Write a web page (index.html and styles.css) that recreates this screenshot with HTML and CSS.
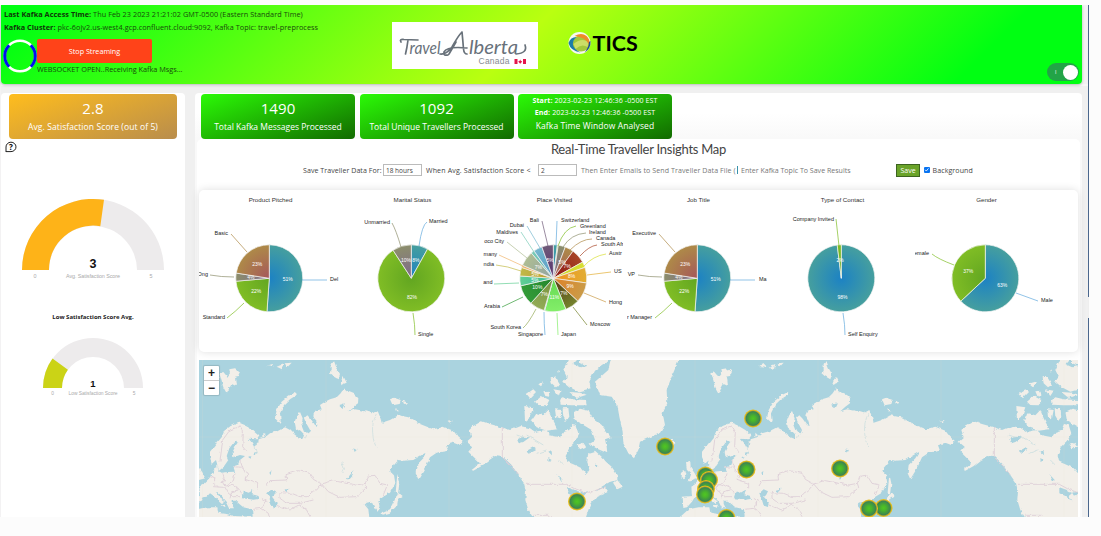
FILE: index.html
```html
<!DOCTYPE html>
<html lang="en">
<head>
<meta charset="utf-8">
<title>Real-Time Traveller Insights</title>
<link rel="stylesheet" href="styles.css">
</head>
<body>
<div class="app">
  <header class="header">
    <div class="status">
      <p class="line access"><b>Last Kafka Access Time:</b> Thu Feb 23 2023 21:21:02 GMT-0500 (Eastern Standard Time)</p>
      <p class="line cluster"><b>Kafka Cluster:</b> pkc-6ojv2.us-west4.gcp.confluent.cloud:9092, Kafka Topic: travel-preprocess</p>
      <div class="stream">
        <svg class="spinner" viewBox="0 0 34 34"><circle cx="17" cy="17" r="15.3" fill="none" stroke="#fff" stroke-width="2.6"/><path d="M6.2 6.2A15.3 15.3 0 0 0 6.2 27.8M27.8 6.2A15.3 15.3 0 0 1 27.8 27.8" fill="none" stroke="#0010f0" stroke-width="3"/></svg>
        <div>
          <button class="stop">Stop Streaming</button>
          <p class="socket">WEBSOCKET OPEN..Receiving Kafka Msgs...</p>
        </div>
      </div>
    </div>
    <svg class="alberta" viewBox="0 0 146 47">
      <rect width="146" height="47" fill="#fff"/>
      <g class="script"><text x="17.500" y="32" textLength="31" lengthAdjust="spacingAndGlyphs" font-size="17">ravel</text><text x="77" y="32" textLength="49" lengthAdjust="spacingAndGlyphs" font-size="19.500">lberta</text></g>
      <g fill="none" stroke="#68717a" stroke-width="1.700" stroke-linecap="round" stroke-linejoin="round"><path d="M9 20Q7 17 12 17.500L26 18M16 18Q15 26 13.500 32"/><path d="M48 32Q54 33 60 25Q66 14 70 10Q71 20 71.500 27Q72 32 75 32M56 33Q51 34 52 30Q55 24 75 26M57 32L64 20"/><path d="M124 32Q136 31 133 23"/></g>
      <text x="86.500" y="42" class="canada" textLength="31">Canada</text>
      <path d="M122.500 37h3v5h-3zM131 37h3v5h-3zM126.200 39.200l1.300-.3.700-1.500.7 1.500 1.300.3-.8 1.400-1.200 1.200-1.200-1.200z" fill="#e4144a"/>
    </svg>
    <div class="tics">
      <svg viewBox="0 0 24 24"><circle cx="12" cy="12" r="11" fill="#f6f8f2"/><ellipse cx="13.500" cy="12.500" rx="8.500" ry="8" fill="#a4c83c"/><path d="M6 13Q14 6 21 11L20 16Q14 12 8 18Z" fill="#ccde68"/><path d="M1 12Q3 6 9 6Q5 9 5.500 14Q7 19 13 21.500Q3 20 1 12Z" fill="#1c7ca8"/><path d="M7 5Q14 1 19 5Q23 9 22 14Q18 6 7 5Z" fill="#ee8a28"/><path d="M23 10Q23.500 18 17 21.500Q21.500 16 21.500 11Z" fill="#205090"/></svg>
      <span>TICS</span>
    </div>
    <div class="toggle"><span>I</span><i></i></div>
  </header>

  <main class="main">
    <aside class="side">
      <div class="card gold"><strong>2.8</strong><span class="cap avg">Avg. Satisfaction Score (out of 5)</span></div>
      <svg class="help" viewBox="0 0 12 12"><path d="M1 11V6A5 4.700 0 1 1 6 10.600H1" fill="none" stroke="#222" stroke-width="1"/><text x="6" y="8.600" text-anchor="middle">?</text></svg>
      <svg class="gauge big" viewBox="0 0 150 86">
        <path d="M4 73A71 71 0 0 1 146 73H119A44 44 0 0 0 31 73Z" fill="#edebec"/>
        <path d="M4 73A71 71 0 0 1 86 2.800L82.300 29.200A44 44 0 0 0 31 73Z" fill="#feb318"/>
        <text class="val" x="75" y="71">3</text><text class="tick" x="17" y="81">0</text><text class="tick" x="133" y="81">5</text><text class="tick" x="75" y="81" textLength="54">Avg. Satisfaction Score</text>
      </svg>
      <h3>Low Satisfaction Score Avg.</h3>
      <svg class="gauge small" viewBox="0 0 110 66">
        <path d="M5 52A50 50 0 0 1 105 52H86A31 31 0 0 0 24 52Z" fill="#edebec"/>
        <path d="M5 52A50 50 0 0 1 14.500 22.600L29.900 33.800A31 31 0 0 0 24 52Z" fill="#cbd316"/>
        <text class="val" x="55" y="51">1</text><text class="tick" x="14.500" y="59">0</text><text class="tick" x="96" y="59">5</text><text class="tick" x="55" y="59" textLength="49">Low Satisfaction Score</text>
      </svg>
    </aside>

    <section class="content">
      <div class="cards">
        <div class="card green"><strong>1490</strong><span class="cap total">Total Kafka Messages Processed</span></div>
        <div class="card green"><strong>1092</strong><span class="cap unique">Total Unique Travellers Processed</span></div>
        <div class="card green window"><p><b>Start:</b> 2023-02-23 12:46:36 -0500 EST</p><p><b>End:</b> 2023-02-23 12:46:36 -0500 EST</p><span class="cap">Kafka Time Window Analysed</span></div>
      </div>
      <div class="insights">
        <h1>Real-Time Traveller Insights Map</h1>
        <div class="filters">
          <label class="f1">Save Traveller Data For:</label><span class="field">18 hours</span>
          <label class="f2">When Avg. Satisfaction Score &lt;</label><span class="field">2</span>
          <span class="f3">Then Enter Emails to Send Traveller Data File (</span><span class="f4">Enter Kafka Topic To Save Results</span>
          <button class="save">Save</button><span class="check"><svg viewBox="0 0 6 6"><path d="M1.200 3L2.500 4.400 4.900 1.500" fill="none" stroke="#fff" stroke-width=".9"/></svg></span><label class="f5">Background</label>
        </div>
        <div class="charts" id="charts"></div>
        <div class="map">
          <svg class="world" viewBox="199 360 879 157">
            <defs>
              <filter id="coast" x="-5%" y="-5%" width="110%" height="110%"><feTurbulence type="fractalNoise" baseFrequency=".2" numOctaves="3" seed="4"/><feDisplacementMap in="SourceGraphic" scale="3.500" xChannelSelector="R" yChannelSelector="G"/></filter>
              <radialGradient id="pin"><stop offset="0" stop-color="#4fc722"/><stop offset=".3" stop-color="#49b52b"/><stop offset=".76" stop-color="#3c8550"/><stop offset=".84" stop-color="#8d9a40"/><stop offset=".92" stop-color="#e6bd18"/><stop offset="1" stop-color="#e6bd18"/></radialGradient>
              <g id="earth">
                <g transform="translate(190 350) scale(.33333)">
                  <g fill="#f2efe9">
                    <path d="M60 305L80 280 95 262 103 242 122 228 148 218 166 226 190 240 208 256 200 268 176 266 186 278 192 290 204 284 206 268 225 262 240 250 262 244 285 232 300 240 312 252 325 262 338 266 342 256 332 245 318 236 314 215 322 195 330 186 338 205 334 225 342 245 356 250 360 240 350 222 342 205 352 196 362 206 375 225 383 228 378 212 370 196 376 182 395 178 390 165 405 155 420 148 440 142 452 130 462 115 475 125 492 132 505 145 504 160 490 170 475 184 495 178 520 182 545 190 562 180 570 200 575 218 600 210 625 196 655 202 690 222 730 238 760 230 790 242 805 262 818 272 808 285 790 278 768 286 774 302 740 308 720 322 705 355 685 388 677 370 680 345 700 325 712 305 690 318 670 330 640 332 625 330 598 362 612 376 616 400 600 428 580 440 565 452 570 475 562 485 552 470 545 455 530 458 524 464 535 478 540 520 190 520 186 478 160 472 148 462 138 452 125 452 125 462 132 475 120 475 110 455 92 435 80 425 88 440 105 452 98 462 75 440 60 430 50 440 38 442 30 455 15 472 4 474 2 440 30 438 28 410 40 402 58 385 65 372 73 358 82 345 85 362 95 368 115 366 135 365 130 350 145 345 150 330 165 318 150 315 130 322 128 305 138 285 145 275 135 272 118 295 110 318 115 330 100 352 87 362 78 330 65 342 60 320Z"/>
                    <path d="M-30 520L-5 500 20 478 50 472 82 472 85 488 110 492 130 498 190 500V520ZM268 218L255 205 260 180 275 155 300 135 318 126 320 135 300 148 282 165 270 190 272 212ZM88 70L100 66 112 80 120 70 135 82 138 108 125 102 118 115 110 130 100 112ZM118 58L135 55 150 65 144 78 130 80 120 70ZM425 42L432 33 440 55 450 72 445 88 428 78 417 68 425 60ZM460 78L470 98 450 106ZM600 148L612 143 632 150 628 162 608 166ZM638 152L655 158 642 162ZM615 175L628 184 618 184ZM772 212L788 210 780 218ZM622 372L628 400 624 434 617 428ZM628 430L638 438 622 448 618 470 600 488 578 494 574 488 600 478 610 460 618 440ZM12 340L25 335 26 352 38 370 46 385 20 392 28 372 15 360ZM-3 365L10 360 13 372 4 388 -4 384ZM228 48L248 42 250 50ZM260 50L280 42 276 58ZM284 40L305 38 292 52ZM220 248L228 256 220 262ZM92 466L108 464 104 474Z"/>
                  </g>
                  <g fill="#aad3df">
                    <path d="M155 445L162 424 176 428 190 420 185 432 205 438 210 446 190 449 172 446ZM232 430L245 418 258 424 252 436 246 440 260 458 258 474 246 470 240 450ZM470 388L484 370 490 360 488 374 476 388ZM448 165L465 160 458 174ZM490 295L500 300 494 306ZM282 420L296 416 290 426ZM188 308L198 306 194 318ZM175 322L184 318 182 326ZM238 368L244 362 242 376Z"/>
                    <path d="M560 190Q545 215 548 250T562 292M455 335L464 355 458 368M350 255L346 265M205 275Q190 290 200 310" fill="none" stroke="#cfe0e0" stroke-width="2.500"/>
                  </g>
                  <g fill="none" stroke="#dccdd6" stroke-width="2.500"><path d="M90 335L98 270 120 240 150 228 160 245 158 290M158 290L170 305M150 330L160 360 175 370 165 388 200 400 200 415M60 380L75 385 70 400 85 410M98 370L105 395 90 400 110 405 130 392 135 370M130 350L155 352M70 410L100 412 125 405 145 415 155 430M105 412L115 430 130 440 150 440M120 445L125 425 145 420M215 445L232 455M230 410L240 392 290 390 288 374 325 362 360 370 370 388 395 402 380 420 365 430 355 440 330 440 305 430 270 428 270 445M395 402L430 392 460 398 500 405 526 400 530 412 500 440 450 442 415 425ZM526 400L535 378 555 376 570 400 592 405 580 435M270 445L290 460 330 460 370 450M260 465L300 480 330 465 350 480 360 500M190 478L215 475 235 490 240 510M215 475L225 455"/></g>
                </g>
                <g transform="translate(480 350) scale(.33333)">
                  <g fill="#f2efe9">
                    <path d="M-32 240L-20 228 5 214 30 222 65 232 90 240 120 228 150 235 165 245 195 240 210 256 240 262 250 245 268 240 276 222 290 225 298 250 285 275 270 290 257 315 262 335 285 345 305 355 320 372 328 360 322 335 325 308 345 302 365 320 378 335 395 350 412 375 412 390 385 398 365 410 345 425 375 410 385 425 370 432 350 440 335 460 325 480 312 520 170 520 145 480 136 450 138 425 132 400 115 375 95 345 70 322 45 318 25 332 5 348 -20 362 -25 360 0 340 -15 325 -35 305 -22 290 -40 275 -25 262Z"/>
                    <path d="M392 28L385 60 345 95 360 135 395 140 412 165 418 200 428 245 430 280 445 310 462 325 475 300 480 275 510 262 540 248 555 225 548 190 562 160 560 120 575 80 600 20ZM250 60L268 20 395 20 370 45 345 62 328 95 332 115 295 125 270 112 250 95 260 80ZM240 150L250 142 275 148 318 150 320 166 275 166 242 164ZM280 185L300 176 325 182 335 200 365 225 392 262 375 268 380 290 382 310 355 298 325 282 345 270 335 240 310 225 285 212ZM155 212L170 190 190 196 205 180 215 205 232 238 200 242 170 232ZM133 168L160 172 150 200 135 212ZM140 132L160 118 168 126 150 145ZM165 155L185 138 208 150 200 166 175 165ZM212 82L225 80 240 104 228 112 215 100ZM220 118L245 122 235 138ZM225 178L245 180 240 205 228 200ZM248 175L265 174 268 200 258 214 250 200ZM172 100L192 94 186 112ZM190 124L206 122 208 140 196 138ZM268 126L300 128 320 134 290 144ZM290 285L310 278 318 290 300 298ZM400 400L412 390 428 410 412 418ZM565 276L578 266 587 278 575 290ZM235 60L240 64 236 68Z"/>
                  </g>
                  <g fill="#aad3df"><path d="M112 268L128 260 150 262 130 276 118 280ZM140 302L160 292 168 298 146 308ZM205 305L215 300 216 316ZM232 372L248 390 244 396ZM262 412L285 420 300 430 290 438 298 452 280 438 262 430ZM300 428L325 424 308 440ZM345 340L355 350 348 354ZM300 20L280 42 300 52 322 48 300 40ZM205 324L215 330 206 336Z"/><path d="M140 255L190 285M110 255L130 262M170 310L200 300M235 330L250 345" fill="none" stroke="#cbdfe0" stroke-width="2.500"/></g>
                  <path d="M67 232V322L90 345 115 375M138 403H262L290 418 325 430 350 420 378 410M160 496H205L225 510" fill="none" stroke="#dccdd6" stroke-width="2.500"/>
                </g>
              </g>
            </defs>
            <rect x="199" y="360" width="879" height="157" fill="#aad3df"/>
            <g filter="url(#coast)"><use href="#earth" x="-492"/><use href="#earth"/><use href="#earth" x="492"/></g>
            <path d="M202.500 360V517M326 360V517M449 360V517M572 360V517M695 360V517M818 360V517M941 360V517M1064 360V517M199 437H1078" stroke="#e8dfcb" stroke-width=".5" opacity=".25"/>
            <g class="pins"><circle cx="577" cy="501.500" r="9"/><circle cx="665" cy="446.500" r="9"/><circle cx="753" cy="418.500" r="9"/><circle cx="746.500" cy="469.500" r="9"/><circle cx="705.500" cy="475.500" r="9"/><circle cx="709" cy="480" r="9"/><circle cx="706" cy="489" r="9"/><circle cx="705" cy="494.500" r="9"/><circle cx="726.500" cy="518" r="9"/><circle cx="840" cy="468.500" r="9"/><circle cx="883.500" cy="508" r="9"/><circle cx="869" cy="508.500" r="9"/></g>
          </svg>
          <div class="zoom"><span>+</span><span>−</span></div>
        </div>
      </div>
    </section>
  </main>
</div>
<script src="charts.js"></script>
</body>
</html>
```
FILE: styles.css
```css
* { box-sizing: border-box; }
body { margin: 0; padding-top: 5px; background: #fcfcfc; font-family: "Open Sans", "Noto Sans", sans-serif; color: #222; }
p, h1, h3 { margin: 0; }
button { border: 0; font-family: inherit; padding: 0; }
.app { width: 1089px; height: 512px; overflow: hidden; background: #f3f2f3; border-right: 1px solid; border-image: linear-gradient(#4b678d 0 57%, #eee 57% 61%, #4b678d 61%) 1; border-width: 0 1px 0 0; padding-left: 1px; }
.header { position: relative; width: 1081px; height: 79px; border-radius: 0 0 4px 4px; background: linear-gradient(135deg, #00ff12 3%, #baff10 48%, #00ff12 89%); box-shadow: 0 1px 3px #0004; display: flex; }
.status { width: 390.5px; padding: 3px 0 0 3px; color: #174a0a; }
.line { font-size: 7.28px; line-height: 13px; white-space: nowrap; font-weight: 500; }
.access { letter-spacing: .06px; }
.cluster { letter-spacing: .05px; }
.line b { font-weight: 700; color: #0f3608; }
.stream { display: flex; }
.spinner { width: 34px; height: 34px; margin-top: 5px; margin-left: -1px; }
.stop { display: block; width: 115px; height: 24px; margin-top: 4.500px; border-radius: 2px; background: #ff4319; color: #fff; font-size: 7.200px; font-weight: 500; }
.socket { font-size: 7.300px; line-height: 13px; white-space: nowrap; }
.alberta { width: 146px; height: 47px; margin-top: 17px; }
.script { font-family: Lato, sans-serif; font-style: italic; fill: #68717a; }
.canada { font-family: "Liberation Sans", sans-serif; font-size: 8.500px; fill: #858b92; }
.tics { display: flex; height: 24px; margin: 26px 0 0 29px; align-items: center; color: #000; font-family: Lato, sans-serif; font-size: 21.500px; font-weight: 700; }
.tics svg { width: 25px; height: 24px; margin-right: 1px; }
.toggle { margin: 58px 3px 0 auto; width: 32px; height: 18px; border-radius: 9px; background: #22a447; display: flex; align-items: center; justify-content: space-between; padding: 0 1.500px 0 8px; color: #fff; font-size: 5px; }
.toggle i { width: 15px; height: 15px; border-radius: 50%; background: #fff; }
.main { display: flex; gap: 10px; padding-top: 7px; height: 433px; background: #f0f0f0; border-top: 2px solid #f8f8f8; }
.side { width: 184px; padding: 1px 8px 0; border-radius: 4px 4px 0 0; background: #fff; display: flex; flex-direction: column; align-items: center; }
.card { width: 154px; height: 45px; border-radius: 4px; color: #fff; display: flex; flex-direction: column; align-items: center; }
.card strong { font-size: 15px; font-weight: 400; line-height: 17px; margin-top: 5.500px; letter-spacing: .1px; }
.cap { font-size: 8.500px; line-height: 12px; margin-top: 4px; white-space: nowrap; }
.avg { letter-spacing: .1px; }
.gold { width: 168px; background: linear-gradient(160deg, #ffbd1d, #b98d4c); }
.green { background: linear-gradient(160deg, #2bfa06, #126b00); }
.window p { font-size: 7.050px; line-height: 11.500px; white-space: nowrap; font-weight: 500; letter-spacing: .1px; }
.window p:first-child { margin-top: 1px; }
.window .cap { margin-top: 2px; letter-spacing: .1px; }
.help { width: 12px; height: 12px; align-self: flex-start; margin: 2px 0 0 -4px; flex: none; }
.help text { font: 700 8px "Open Sans", sans-serif; }
.gauge { flex: none; overflow: visible; }
.big { width: 150px; height: 86px; margin-top: 44px; margin-left: -1px; }
.small { width: 110px; height: 66px; margin-top: 14px; margin-left: -1px; }
.val { font: 700 12.500px "Liberation Sans", sans-serif; text-anchor: middle; fill: #111; }
.small .val { font-size: 9.500px; }
.tick { font: 5.400px "Liberation Sans", sans-serif; text-anchor: middle; fill: #aaa; }
.small .tick { font-size: 4.900px; }
.side h3 { margin-top: 29px; font-size: 6px; line-height: 10px; font-weight: 700; white-space: nowrap; }
.content { width: 887px; padding: 1px 0 0; border-radius: 4px 4px 0 0; background: linear-gradient(#fff 20px, #f9f9f9 45px); }
.cards { display: flex; gap: 4.500px; margin-left: 6px; }
.insights { margin: 0 2px; padding: 1px 2px 0; height: 380px; background: #fff; border-radius: 5px 5px 0 0; }
h1 { font: 400 13px/18px Lato, sans-serif; text-align: center; margin-left: 0; letter-spacing: -.26px; color: #444; white-space: nowrap; }
.filters { display: flex; height: 20px; margin: 2px 0 0 104px; align-items: center; font-size: 7.050px; white-space: nowrap; color: #444; }
.f1 { width: 80px; letter-spacing: .05px; }
.field { width: 39px; height: 12px; border: 1px solid #bbb; padding-left: 2px; line-height: 11px; font-size: 6.500px; }
.f2 { width: 116px; padding-left: 4px; letter-spacing: .14px; }
.f3 { width: 158px; padding-left: 4px; color: #777; letter-spacing: .09px; }
.f4 { width: 161px; padding-left: 6px; color: #777; position: relative; }
.f4::before { content: ""; position: absolute; left: 2px; top: 1px; width: 1px; height: 8px; background: #3992aa; }
.save { width: 24px; height: 13px; background: #6aa329; border: 1px solid #3d6420; color: #fff; font-size: 7px; line-height: 11px; }
.check { width: 5.500px; height: 5.500px; margin: 0 3px 0 4px; border-radius: 1px; background: #0873f1; display: flex; }
.f5 { letter-spacing: .1px; }
.charts { display: grid; grid-template-columns: 142px 142px 144px 144px 144px 140px; height: 162px; margin-top: 10px; border-radius: 5px; background: #fff; box-shadow: 0 0 9px #0002; }
.charts svg { width: 140px; height: 162px; overflow: hidden; }
.charts text { font-family: "Liberation Sans", sans-serif; font-size: 5.500px; fill: #222; }
.charts .title { font-size: 6.200px; text-anchor: middle; fill: #333; }
.charts .pct { font-size: 5px; text-anchor: middle; fill: #fff; }
.map { position: relative; margin-top: 8px; height: 157px; width: 879px; }
.world { display: block; width: 879px; height: 157px; }
.pins circle { fill: url(#pin); }
.zoom { position: absolute; left: 5px; top: 6px; width: 15px; height: 29px; background: #fff; border-radius: 1px; box-shadow: 0 0 1px 1px #0002; display: flex; flex-direction: column; font: 700 12px/14px "Liberation Sans", sans-serif; text-align: center; }
.zoom span + span { border-top: 1px solid #ccc; }
```
FILE: charts.js
```javascript
const BLUE = ['#1c82c4', '#469f9e'], GREEN = ['#62a621', '#80bd25'], GREY = ['#7d688c', '#8c8e6b'], BROWN = ['#a5575a', '#ae8a48'];
// Each slice: end angle, colour pair, percentage text, label, label x, label baseline, anchor, leader path
const charts = [
  ['Product Pitched', [
    [184, BLUE, '51%', 'Del', 131, 91, 'start', 'M103 90H128'],
    [265, GREEN, '22%', 'Standard', 26, 129, 'end', 'M45 113Q36 122 28 128'],
    [279, GREY, '4%', 'Ong', 9, 86, 'end', 'M35 87Q22 87 11 85'],
    [360, BROWN, '23%', 'Basic', 29, 45, 'end', 'M48 62L32 44']]],
  ['Marital Status', [
    [29, BLUE, '8%', 'Married', 88, 33, 'start', 'M78 56Q81 35 86 32'],
    [327, GREEN, '82%', 'Single', 77, 146, 'start', 'M72 123Q74 135 74 145'],
    [360, GREY, '10%', 'Unmarried', 49, 34, 'end', 'M60 57Q55 40 51 33']]],
  ['Place Visited', [
    [7, BLUE, '', 'Switzerland', 78, 32, 'start', 'M73 56L74 31'],
    [8.5, GREEN, '', 'Greenland', 97, 38, 'start', 'M75 56Q81 38 93 36'],
    [21, GREY, '', 'Ireland', 106, 44, 'start', 'M80 57Q88 44 103 43'],
    [36, BROWN, '5%', 'Canada', 113, 50, 'start', 'M87 60Q98 49 109 49'],
    [61, ['#8e1616', '#a84526'], '7%', 'South Afr', 118, 56, 'start', 'M97 66Q106 56 114 55'],
    [71, ['#ccd32a', '#d9df32'], '', 'Austr', 126, 65, 'start', 'M101 76Q110 66 123 64'],
    [98, ['#f09021', '#e2ae32'], '8%', 'US', 131, 83, 'start', 'M104 85L128 82'],
    [133, ['#df8127', '#ca9b48'], '9%', 'Hong', 126, 114, 'start', 'M101 103L123 112'],
    [158, ['#583a13', '#75832d'], '7%', 'Moscow', 107, 136, 'start', 'M90 117L104 135'],
    [195, ['#65d953', '#83ee69'], '11%', 'Japan', 78, 146, 'start', 'M74 123L75 145'],
    [196, BLUE, '', 'Singapore', 60, 146, 'end', 'M61 122Q61 134 62 145'],
    [222, ['#74913c', '#93ab57'], '7%', 'South Korea', 38, 139, 'end', 'M53 119Q45 134 40 138'],
    [257, ['#23862d', '#339b38'], '10%', 'Arabia', 17, 118, 'end', 'M40 107L19 117'],
    [274, ['#34b99b', '#63ce94'], '5%', 'and', 9.5, 94, 'end', 'M36 93L11 94'],
    [289, ['#b99b34', '#c2b948'], '5%', 'ndia', 11, 76, 'end', 'M38 81Q24 76 13 75'],
    [293, ['#e9a359', '#f0b46b'], '', 'many', 14, 66, 'end', 'M40 76L16 65'],
    [319, ['#8fa2a2', '#afbd93'], '7%', 'oco City', 21, 53, 'end', 'M44 68L24 52'],
    [325, ['#5bb5b4', '#7bcbb7'], '', 'Maldives', 35, 44, 'end', 'M51 62L38 42'],
    [340, ['#579ac4', '#75b7ce'], '', 'Dubai', 41, 37, 'end', 'M57 58L44 36'],
    [360, ['#55306f', '#705a78'], '5%', 'Bali', 56, 32, 'end', 'M65 56L59 31']]],
  ['Job Title', [
    [184, BLUE, '51%', 'Ma', 132, 91, 'start', 'M103 90H128'],
    [265, GREEN, '22%', 'r Manager', 25, 129, 'end', 'M45 113Q36 122 28 128'],
    [279, GREY, '4%', 'VP', 8, 86, 'end', 'M35 87Q22 87 11 85'],
    [360, BROWN, '23%', 'Executive', 29, 45, 'end', 'M48 62L32 44']]],
  ['Type of Contact', [
    [353, BLUE, '98%', 'Self Enquiry', 77, 146, 'start', 'M72 123Q74 135 74 145'],
    [360, GREEN, '2%', 'Company Invited', 63, 31, 'end', 'M68 56L65 29']]],
  ['Gender', [
    [227, BLUE, '63%', 'Male', 126, 112, 'start', 'M101 103L123 111'],
    [360, GREEN, '37%', 'emale', 14, 65, 'end', 'M39 75Q23 69 17 64']]]
];
const CX = 70.3, CY = 88.3, R = 33.5;
const pt = (a, r) => [CX + r * Math.sin(a * Math.PI / 180), CY - r * Math.cos(a * Math.PI / 180)].map(v => v.toFixed(2)).join(' ');
document.getElementById('charts').innerHTML = charts.map(([title, slices], c) => {
  let from = 0, defs = '', body = '', top = '';
  slices.forEach(([to, col, pct, label, x, y, anchor, lead], i) => {
    const id = `g${c}_${i}`;
    defs += `<radialGradient id="${id}" gradientUnits="userSpaceOnUse" cx="${CX}" cy="${CY}" r="${R}"><stop offset="0" stop-color="${col[0]}"/><stop offset="1" stop-color="${col[1]}"/></radialGradient>`;
    body += `<path d="M${CX} ${CY}L${pt(from, R)}A${R} ${R} 0 ${to - from > 180 ? 1 : 0} 1 ${pt(to, R)}Z" fill="url(#${id})" stroke="#f4f4f4" stroke-width=".7"/>`;
    top += `<path d="${lead}" fill="none" stroke="${col === BLUE ? '#62a9dc' : col[1]}" stroke-width=".7"/><text x="${x}" y="${y}" text-anchor="${anchor}">${label}</text>`;
    if (pct) {
      const [px, py] = pt((from + to) / 2, 18.5).split(' ');
      top += `<text class="pct" x="${px}" y="${+py + 1.8}">${pct}</text>`;
    }
    from = to;
  });
  return `<svg viewBox="0 0 140 162"><defs>${defs}</defs><text class="title" x="71.5" y="11.5">${title}</text>${body}${top}</svg>`;
}).join('');
```
